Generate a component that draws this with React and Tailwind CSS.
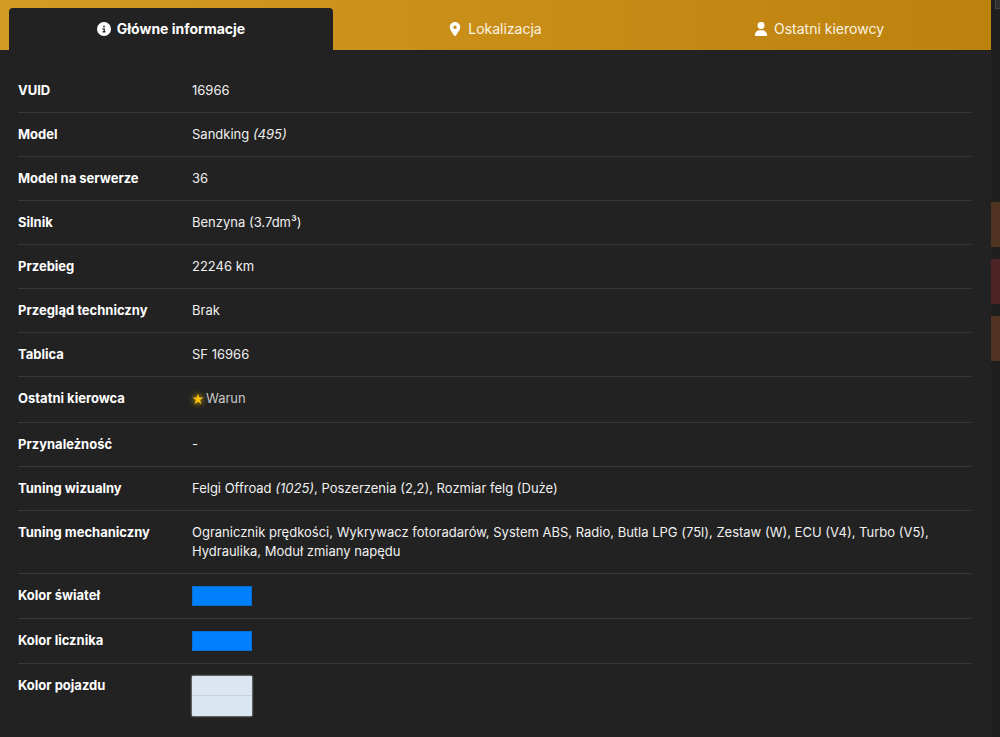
import { useState } from "react";
import { FaCircleInfo, FaLocationDot, FaUser } from "react-icons/fa6";

const tabs = [
    { id: "info", label: "Główne informacje", icon: FaCircleInfo },
    { id: "location", label: "Lokalizacja", icon: FaLocationDot },
    { id: "drivers", label: "Ostatni kierowcy", icon: FaUser },
];

const rows = [
    { label: "VUID", value: "16966" },
    { label: "Model", value: <>Sandking <em>(495)</em></> },
    { label: "Model na serwerze", value: "36" },
    { label: "Silnik", value: "Benzyna (3.7dm³)" },
    { label: "Przebieg", value: "22246 km" },
    { label: "Przegląd techniczny", value: "Brak" },
    { label: "Tablica", value: "SF 16966" },
    { label: "Ostatni kierowca", value: <Driver name="Warun" /> },
    { label: "Przynależność", value: "-" },
    { label: "Tuning wizualny", value: <>Felgi Offroad <em>(1025)</em>, Poszerzenia (2,2), Rozmiar felg (Duże)</> },
    {
        label: "Tuning mechaniczny",
        value: "Ogranicznik prędkości, Wykrywacz fotoradarów, System ABS, Radio, Butla LPG (75l), Zestaw (W), ECU (V4), Turbo (V5), Hydraulika, Moduł zmiany napędu",
    },
    { label: "Kolor świateł", value: <div className="h-5 w-15 border border-[#0870d4] bg-[#0080ff]" /> },
    { label: "Kolor licznika", value: <div className="h-5 w-15 border border-[#0870d4] bg-[#0080ff]" /> },
    { label: "Kolor pojazdu", value: <VehicleColors /> },
];

function Driver({ name }) {
    return (
        <a href="#driver" className="inline-flex items-center gap-0.5 text-[#c8c8c8]">
            <svg viewBox="0 0 24 24" className="size-3 fill-[#ffc107] drop-shadow-[0_0_3px_#ffc107]" aria-hidden="true">
                <path d="M12 1l2.7 8.1H23l-6.8 5 2.6 8.4L12 17.4l-6.8 5.1 2.6-8.4L1 9.100h8.300z" />
            </svg>
            {name}
        </a>
    );
}

function VehicleColors() {
    return (
        <div className="w-15 shadow-[0_0_2px_#dce8f0]">
            <div className="h-5 border-b border-[#c6cfda] bg-[#dce6f0]" />
            <div className="h-5 bg-[#dae7f0]" />
        </div>
    );
}

export default function App() {
    const [active, setActive] = useState("info");

    return (
        <div className="flex min-h-screen bg-[#1f1f1f] font-['Inter',sans-serif] text-[13px] leading-[19px] text-[#f0f0f0]">
            <main className="flex-1 bg-[#222222]">
                <div role="tablist" className="flex h-[50px] bg-linear-to-r from-[#d39a24] via-[#c88e18] to-[#bc820d] pt-2 pr-[10px] pl-[9px]">
                    {tabs.map(({ id, label, icon: Icon }) => (
                        <button
                            key={id}
                            type="button"
                            role="tab"
                            aria-selected={active === id}
                            onClick={() => setActive(id)}
                            className={`flex flex-1 items-center justify-center gap-1.5 rounded-t text-sm ${
                                active === id ? "bg-[#222222] font-bold text-white" : "text-[#fbf3e2]"
                            }`}
                        >
                            <Icon className="size-3.5 text-white" />
                            {label}
                        </button>
                    ))}
                </div>
                <div className="px-[18px] pt-[19px] pr-5">
                    <table className="w-full">
                        <tbody>
                            {rows.map((row) => (
                                <tr key={row.label} className="border-b border-[#383838] last:border-b-0">
                                    <th scope="row" className="w-[174px] py-3 text-left align-top font-bold text-white">
                                        {row.label}
                                    </th>
                                    <td className="py-3 pr-8 align-top">{row.value}</td>
                                </tr>
                            ))}
                        </tbody>
                    </table>
                </div>
            </main>
            {/* edge of the vehicle list behind the panel */}
            <aside className="w-[9px]">
                <div className="ml-1 h-[9px] border-b border-l border-[#3c4650] bg-[#303030]" />
                <div className="mt-[193px] flex flex-col gap-3">
                    <div className="h-[45px] bg-[#503421]" />
                    <div className="h-[45px] bg-[#4c2424]" />
                    <div className="h-[45px] bg-[#503421]" />
                </div>
            </aside>
        </div>
    );
}
